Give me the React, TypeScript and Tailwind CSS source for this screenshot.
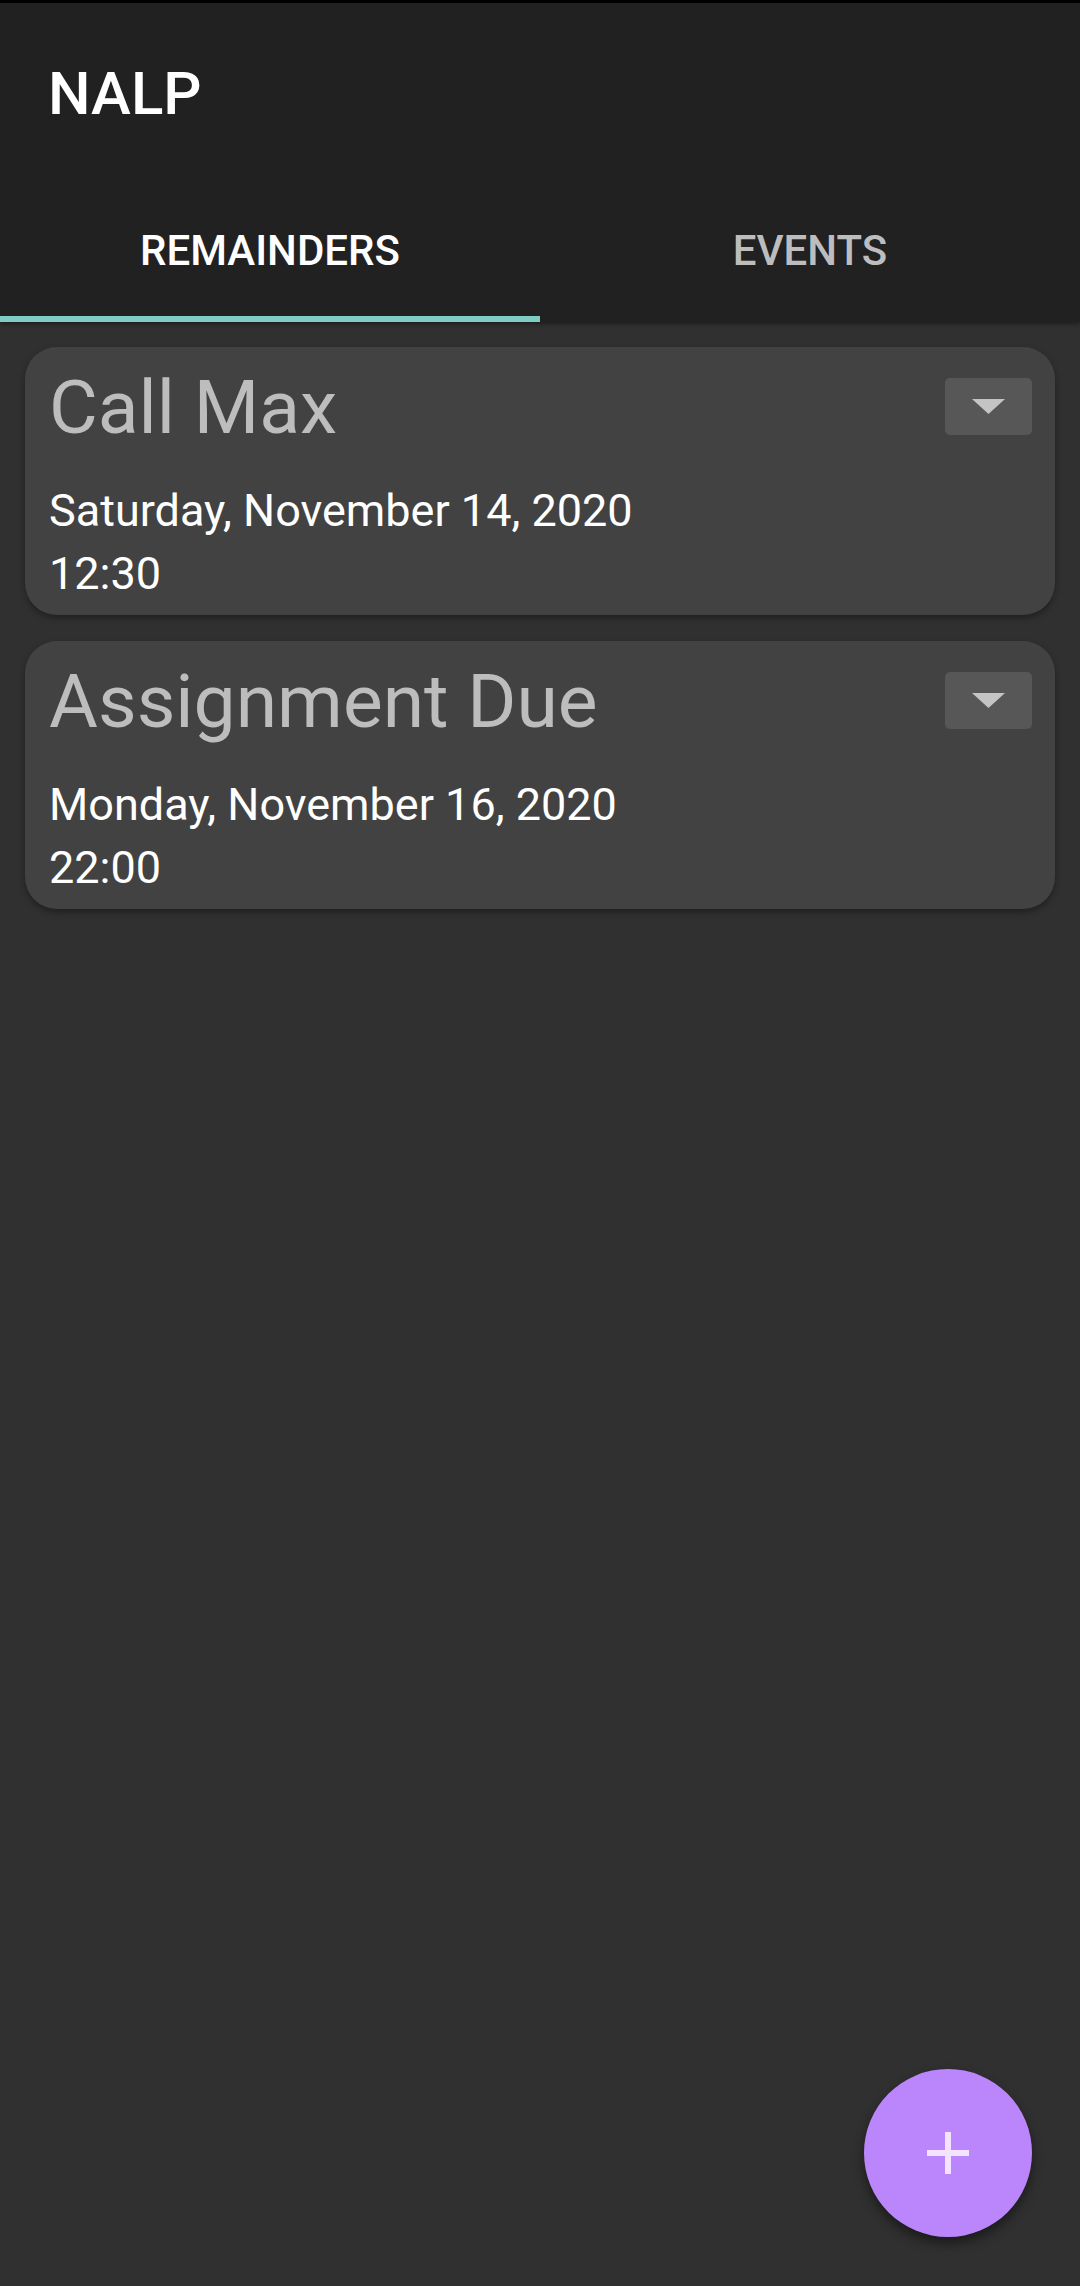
import React, { useState } from "react";

type Reminder = {
  title: string;
  date: string;
  time: string;
};

const reminders: Reminder[] = [
  { title: "Call Max", date: "Saturday, November 14, 2020", time: "12:30" },
  { title: "Assignment Due", date: "Monday, November 16, 2020", time: "22:00" },
];

function ReminderCard({ title, date, time }: Reminder) {
  return (
    <div className="bg-[#424242] rounded-[32px] pl-[24px] pr-[23px] pt-[23px] pb-[10px] shadow-[0_3px_6px_rgba(0,0,0,0.35)]">
      <div className="flex justify-between items-start">
        <h3 className="text-[75px] leading-none text-[#bdbdbd] font-normal">
          {title}
        </h3>
        <button
          type="button"
          className="mt-[8px] w-[87px] h-[57px] bg-[#575757] rounded-[5px] flex items-center justify-center"
        >
          <svg width="33" height="15" viewBox="0 0 33 15">
            <path d="M0 0 L33 0 L16.5 15 Z" fill="#c4c4c4" />
          </svg>
        </button>
      </div>
      <div className="mt-[34px] text-[45px] leading-[63px] text-white">
        <p>{date}</p>
        <p>{time}</p>
      </div>
    </div>
  );
}

function App() {
  const [tab, setTab] = useState(0);

  return (
    <div
      className="relative w-full h-screen bg-[#303030] overflow-hidden"
      style={{ fontFamily: "Roboto, 'Noto Sans', sans-serif" }}
    >
      <header className="bg-[#212121] border-t-[3px] border-black shadow-[0_2px_4px_rgba(0,0,0,0.4)] relative z-10">
        <div className="h-[181px] flex items-center px-[48px]">
          <h1 className="text-[60px] leading-none font-medium text-white">
            NALP
          </h1>
        </div>
        <div className="flex h-[138px]">
          {["REMAINDERS", "EVENTS"].map((label, i) => (
            <button
              key={label}
              type="button"
              onClick={() => setTab(i)}
              className="flex-1 flex flex-col"
            >
              <span
                className={
                  "flex-1 flex items-center justify-center text-[42px] font-medium " +
                  (tab === i ? "text-white" : "text-[#bdbdbd]")
                }
              >
                {label}
              </span>
              <span
                className={
                  "h-[6px] w-full " + (tab === i ? "bg-[#80cbc4]" : "bg-transparent")
                }
              />
            </button>
          ))}
        </div>
      </header>

      <main className="flex flex-col gap-[26px] px-[25px] pt-[25px]">
        {tab === 0 &&
          reminders.map((r) => (
            <ReminderCard key={r.title} title={r.title} date={r.date} time={r.time} />
          ))}
      </main>

      <button
        type="button"
        className="absolute right-[48px] bottom-[49px] w-[168px] h-[168px] rounded-full bg-[#bb86fc] flex items-center justify-center shadow-[0_6px_12px_rgba(0,0,0,0.45)]"
      >
        <svg width="42" height="42" viewBox="0 0 42 42">
          <rect x="18" y="0" width="6" height="42" fill="#f3e3ff" />
          <rect x="0" y="18" width="42" height="6" fill="#f3e3ff" />
        </svg>
      </button>
    </div>
  );
}

export default App;
